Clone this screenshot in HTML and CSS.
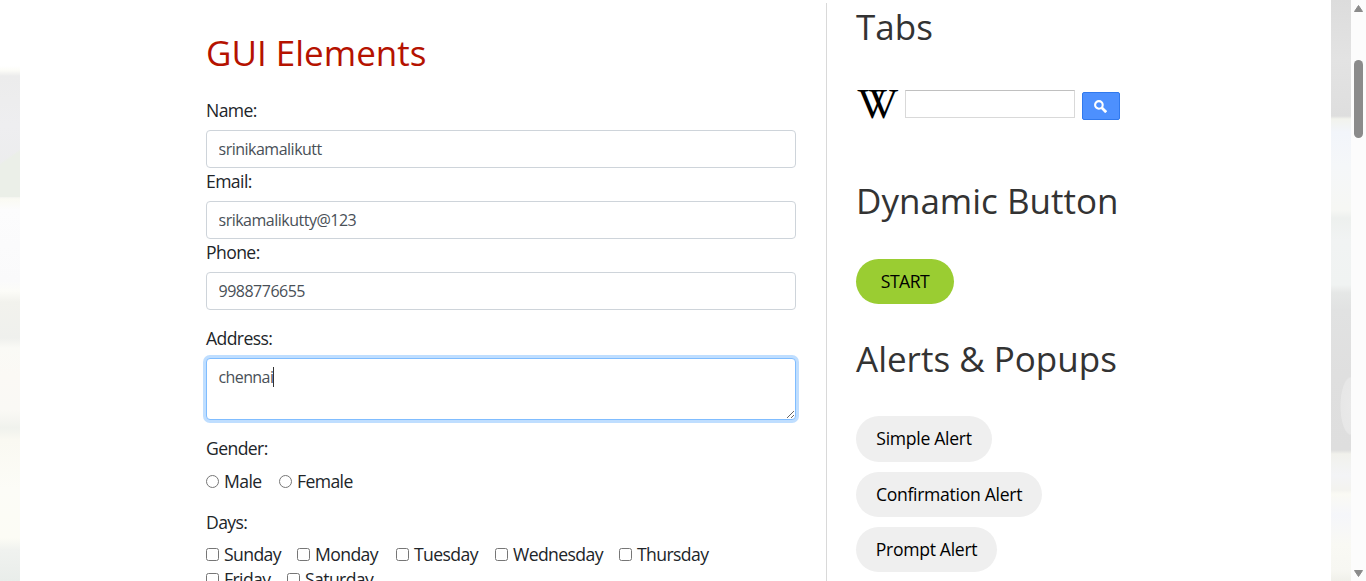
FILE: index.html
```html
<!DOCTYPE html>
<html lang="en">
<head>
<meta charset="utf-8">
<title>GUI Elements</title>
<link rel="stylesheet" href="styles.css">
</head>
<body>
<div class="backdrop backdrop-left"></div>
<div class="page">
  <main class="main">
    <h2 class="title title-red">GUI Elements</h2>
    <form class="form">
      <label class="label" for="name">Name:</label>
      <input class="control" id="name" type="text" value="srinikamalikutt">
      <label class="label" for="email">Email:</label>
      <input class="control" id="email" type="text" value="srikamalikutty@123">
      <label class="label" for="phone">Phone:</label>
      <input class="control digits" id="phone" type="text" value="9988776655">
      <label class="label label-address" for="address">Address:</label>
      <div class="area">
        <textarea class="control focused" id="address">chennai</textarea>
        <span class="caret"></span>
      </div>
      <div class="label label-gender">Gender:</div>
      <div class="options gender">
        <label class="option male"><input type="radio" name="g">Male</label>
        <label class="option"><input type="radio" name="g">Female</label>
      </div>
      <div class="label label-days">Days:</div>
      <div class="options">
        <label class="option sun"><input type="checkbox">Sunday</label>
        <label class="option mon"><input type="checkbox">Monday</label>
        <label class="option tue"><input type="checkbox">Tuesday</label>
        <label class="option wed"><input type="checkbox">Wednesday</label>
        <label class="option"><input type="checkbox">Thursday</label>
      </div>
      <div class="options">
        <label class="option fri"><input type="checkbox">Friday</label>
        <label class="option"><input type="checkbox">Saturday</label>
      </div>
    </form>
  </main>
  <aside class="side">
    <h2 class="title title-tabs">Tabs</h2>
    <div class="search">
      <span class="wiki">VV</span>
      <input class="query" type="text" aria-label="Search">
      <button class="go" aria-label="Search">
        <svg width="13" height="13" viewBox="0 0 13 13"><circle cx="4.9" cy="4.9" r="3.8" fill="none" stroke="#fff" stroke-width="2.1"/><path d="M7.8 7.8L12.2 12.2" stroke="#fff" stroke-width="2.8"/></svg>
      </button>
    </div>
    <h2 class="title title-dynamic">Dynamic Button</h2>
    <button class="pill start">START</button>
    <h2 class="title title-alerts">Alerts &amp; Popups</h2>
    <button class="pill simple">Simple Alert</button>
    <button class="pill confirm">Confirmation Alert</button>
    <button class="pill prompt">Prompt Alert</button>
  </aside>
</div>
<div class="backdrop backdrop-right"></div>
<div class="scrollbar">
  <svg width="9" height="7" viewBox="0 0 9 7"><path d="M4.5 0.5L8.5 6.5H0.5Z" fill="#8b8b8b" stroke="#8b8b8b" stroke-linejoin="round"/></svg>
  <div class="thumb"></div>
  <svg width="9" height="7" viewBox="0 0 9 7"><path d="M4.5 6.5L8.5 0.5H0.5Z" fill="#8b8b8b" stroke="#8b8b8b" stroke-linejoin="round"/></svg>
</div>
</body>
</html>
```
FILE: styles.css
```css
* { box-sizing: border-box; }
body {
  margin: 0;
  height: 581px;
  overflow: hidden;
  display: flex;
  background: #fff;
  color: #212529;
  font: 17.6px/26px "Open Sans", "Noto Sans", sans-serif;
  letter-spacing: -0.6px;
}
.backdrop { width: 20px; flex: none; }
.backdrop-left {
  background:
    linear-gradient(145deg, transparent 48%, #ebefe8 51%) 0 118px / 20px 79px no-repeat,
    linear-gradient(#fff 0, #fff 66px, #fdfdf8 70px, #ececec 76px, #eeeef0 125px, #ebecec 195px, #fafaf3 199px, #fcfcfd 210px, #fafafb 280px, #fcfcf8 291px, #f2f2ed 302px, #eff0ed 338px, #fafaf6 348px, #fbf9f5 375px, #faf9f5 410px, #f0f2ed 428px, #faf9f2 440px, #fcfcf7 490px, #fcfcf5 538px, #f0f2ef 550px, #e9edea 581px);
}
.backdrop-right {
  background:
    radial-gradient(ellipse at 100% 50%, #e9e9e9 0, #e7e7e7 65%, transparent 70%) 9px 376px / 11px 60px no-repeat,
    linear-gradient(#dcdcdc 0, #e3e3e3 60px, #e0e0e0 95px, #dedede 116px, #f2f3ed 119px, #f2f5fa 132px, #f5f7f9 165px, #f6f7f4 210px, #edf0ee 218px, #f1f3f3 240px, #f0f3f2 285px, #e5e7e6 293px, #e1e2e2 310px, #dfdfdf 375px, #dedede 450px, #f1f1ec 454px, #f3f4f6 475px, #f3f3ef 490px, #fafaf4 494px, #f5f6fa 515px, #f9f9f4 545px, #f7f7f2 570px, #f0f0ea 581px);
}
.page { width: 1311px; height: 581px; flex: none; display: flex; padding-left: 186px; overflow: hidden; }
.main { width: 621px; flex: none; margin-top: 3px; border-right: 1px solid #d9d9d9; padding: 26px 30px 0 0; }
.title { margin: 0; font-size: 35px; line-height: 48px; font-weight: 400; color: #333; letter-spacing: 0; white-space: nowrap; }
.title-red { color: #b51200; }
.form { display: flex; flex-direction: column; padding-top: 20px; }
.label { height: 33px; }
.control {
  width: 590px; height: 38px; margin: 0; padding: 6px 12px 6px 11.5px;
  border: 1px solid #ced4da; border-radius: 4px; background: #fff; color: #495057;
  font: 16px/24px "Open Sans", "Noto Sans", sans-serif; letter-spacing: -0.5px; display: block; outline: none;
}
.label-address { margin-top: 15px; }
.area { position: relative; height: 62px; }
.focused { height: 62px; border-color: #80bdff; box-shadow: 0 0 0 3px #bfdeff; resize: both; overflow: auto; letter-spacing: -0.6px; }
.caret { position: absolute; left: 67px; top: 9px; width: 1px; height: 20px; background: #333; }
.label-gender { margin-top: 15px; }
.label-days { height: 32px; }
.options { display: flex; height: 25px; }
.options.gender { height: 41px; }
.option { display: flex; height: 26px; gap: 5px; align-items: center; white-space: nowrap; }
.option input { margin: 0; width: 13px; height: 13px; flex: none; }
.male { width: 73px; }
.sun { width: 91px; }
.mon, .tue { width: 99px; }
.wed { width: 124px; }
.fri { width: 81px; }
.side { padding-left: 29px; display: flex; flex-direction: column; align-items: flex-start; }
.title-tabs { margin-top: 3px; }
.search { display: flex; margin-top: 37px; height: 34px; padding-top: 2px; }
.wiki { font: 42px/28px "Liberation Serif", serif; color: #000; width: 49px; letter-spacing: -19px; padding-left: 1px; white-space: nowrap; font-kerning: none; }
.query { width: 170px; height: 28px; border: 1px solid #d9d9d9; border-top-color: #c0c0c0; padding: 0; margin: 0; }
.go { width: 38px; height: 28px; margin: 2px 0 0 7px; padding: 0 2px 0 0; border: 1px solid #3079ed; border-radius: 2px; background: #4d90fe; display: flex; align-items: center; justify-content: center; }
.title-dynamic { margin-top: 55px; }
.pill { height: 45px; padding: 0 0 2px; border: 0; border-radius: 23px; background: #efefef; color: #000; font: 17.6px/26px "Open Sans", "Noto Sans", sans-serif; letter-spacing: -0.3px; flex: none; white-space: nowrap; }
.start { width: 98px; margin-top: 34px; background: #9acd32; letter-spacing: -0.5px; }
.title-alerts { margin-top: 31px; }
.simple { width: 136px; height: 46px; margin-top: 33px; }
.confirm { width: 186px; margin-top: 10px; }
.prompt { width: 141px; margin-top: 10px; }
.scrollbar { width: 15px; height: 581px; flex: none; background: #fcfcfc; display: flex; flex-direction: column; align-items: center; padding: 5px 0 4px; }
.thumb { width: 9px; height: 78px; border-radius: 5px; background: #8b8b8b; margin: 48px 0 auto; }
```
